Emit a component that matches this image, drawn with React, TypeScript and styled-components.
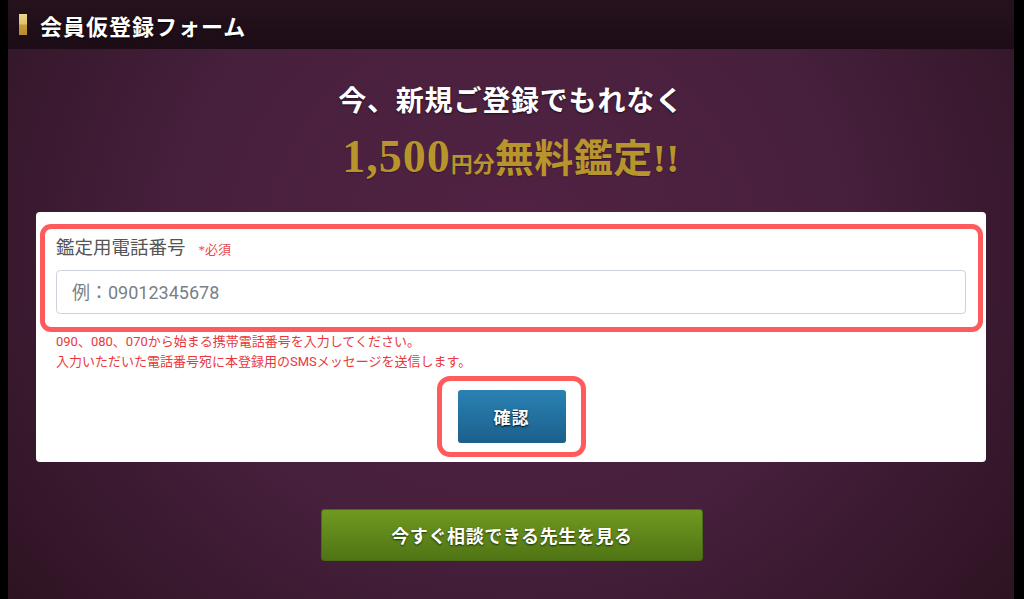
import React from "react";
import styled, { createGlobalStyle } from "styled-components";

const Global = createGlobalStyle`
  html, body { margin: 0; padding: 0; background: #000; }
  body { width: 1024px; height: 599px; overflow: hidden; }
  * { box-sizing: border-box; }
`;

const serif = `"Liberation Serif", "Noto Sans CJK JP", serif`;
const sans = `Roboto, "Noto Sans CJK JP", sans-serif`;

const Frame = styled.div`
  width: 1024px;
  height: 599px;
  padding: 0 10px 0 8px;
  background: #000;
  display: flex;
`;

const Page = styled.div`
  flex: 1;
  display: flex;
  flex-direction: column;
  background: radial-gradient(ellipse 65% 100% at 50% 40%, #522243 0%, #47203d 50%, #2c1321 100%);
`;

const Header = styled.header`
  height: 49px;
  flex: none;
  display: flex;
  align-items: center;
  gap: 13px;
  padding-left: 11px;
  background: linear-gradient(#25121d, #1c0c16);
`;

const GoldMark = styled.span`
  width: 8px;
  height: 21px;
  background: linear-gradient(#ecd68c 0%, #e0c46a 45%, #c39a3c 55%, #b58b30 100%);
`;

const Title = styled.h1`
  margin: 0;
  font-family: ${serif};
  font-weight: 700;
  font-size: 22px;
  letter-spacing: 1px;
  color: #fff;
  text-shadow: 0 1px 2px #000;
`;

const Hero = styled.div`
  display: flex;
  flex-direction: column;
  align-items: center;
  padding-top: 34px;
`;

const Lead = styled.div`
  font-family: ${serif};
  font-weight: 700;
  font-size: 28px;
  letter-spacing: 0.8px;
  line-height: 38px;
  color: #fff;
  text-shadow: 0 1px 2px rgba(0,0,0,0.6);
`;

const Offer = styled.div`
  margin-top: 10px;
  font-family: ${serif};
  font-weight: 700;
  color: #b8942c;
  line-height: 52px;
  display: flex;
  align-items: baseline;
  text-shadow: 0 1px 1px rgba(0,0,0,0.3);
`;

const Amount = styled.span`
  font-size: 46px;
  letter-spacing: 1px;
`;

const Unit = styled.span`
  font-size: 22px;
`;

const Big = styled.span`
  font-size: 39px;
  letter-spacing: 0.5px;
`;

const Card = styled.section`
  margin: 21px 28px 0;
  background: #fff;
  border-radius: 4px;
  padding: 12px 3px 5px 4px;
  display: flex;
  flex-direction: column;
`;

const Highlight = styled.div`
  border: 5px solid #ff5a5c;
  border-radius: 11px;
`;

const FieldBox = styled(Highlight)`
  padding: 9px 12px 13px 11px;
`;

const LabelRow = styled.div`
  display: flex;
  align-items: baseline;
  gap: 13px;
  height: 20px;
  line-height: 20px;
`;

const Label = styled.label`
  font-family: ${serif};
  font-size: 18.5px;
  color: #555;
`;

const Required = styled.span`
  font-family: ${serif};
  font-size: 13px;
  color: #e8474c;
`;

const Input = styled.input`
  margin-top: 12px;
  display: block;
  width: 100%;
  height: 44px;
  border: 1px solid #ccd3dc;
  border-radius: 4px;
  padding: 0 15px;
  font-family: ${sans};
  font-size: 18px;
  color: #333;
  outline: none;
  &::placeholder { color: #7a7f86; }
`;

const Note = styled.p`
  margin: 0 0 0 16px;
  font-family: ${sans};
  font-size: 13px;
  line-height: 20px;
  color: #e8383d;
`;

const ButtonWrap = styled(Highlight)`
  align-self: center;
  margin-top: 4px;
  margin-right: 1px;
  padding: 9px 15px 9px 16px;
  border-radius: 13px;
`;

const BlueButton = styled.button`
  width: 108px;
  height: 53px;
  border: none;
  border-radius: 3px;
  background: linear-gradient(#2a82b3, #1b5f8c);
  color: #fff;
  font-family: ${serif};
  font-weight: 700;
  font-size: 17px;
  letter-spacing: 1px;
  text-shadow: 0 1px 2px #000;
  cursor: pointer;
`;

const Footer = styled.div`
  display: flex;
  justify-content: center;
  padding-top: 47px;
`;

const GreenButton = styled.button`
  width: 382px;
  height: 52px;
  border: 1px solid #4a6a15;
  border-radius: 3px;
  background: linear-gradient(#6f9a20, #4f7415);
  color: #fff;
  font-family: ${serif};
  font-weight: 700;
  font-size: 18px;
  letter-spacing: 0.6px;
  text-shadow: 0 1px 2px #1a2a05;
  cursor: pointer;
  margin-left: 2px;
`;

export default function App() {
  return (
    <>
      <Global />
      <Frame>
        <Page>
          <Header>
            <GoldMark />
            <Title>会員仮登録フォーム</Title>
          </Header>
          <Hero>
            <Lead>今、新規ご登録でもれなく</Lead>
            <Offer>
              <Amount>1,500</Amount>
              <Unit>円分</Unit>
              <Big>無料鑑定!!</Big>
            </Offer>
          </Hero>
          <Card>
            <FieldBox>
              <LabelRow>
                <Label htmlFor="tel">鑑定用電話番号</Label>
                <Required>*必須</Required>
              </LabelRow>
              <Input id="tel" type="tel" placeholder="例：09012345678" />
            </FieldBox>
            <Note>
              090、080、070から始まる携帯電話番号を入力してください。
              <br />
              入力いただいた電話番号宛に本登録用のSMSメッセージを送信します。
            </Note>
            <ButtonWrap>
              <BlueButton>確認</BlueButton>
            </ButtonWrap>
          </Card>
          <Footer>
            <GreenButton>今すぐ相談できる先生を見る</GreenButton>
          </Footer>
        </Page>
      </Frame>
    </>
  );
}
